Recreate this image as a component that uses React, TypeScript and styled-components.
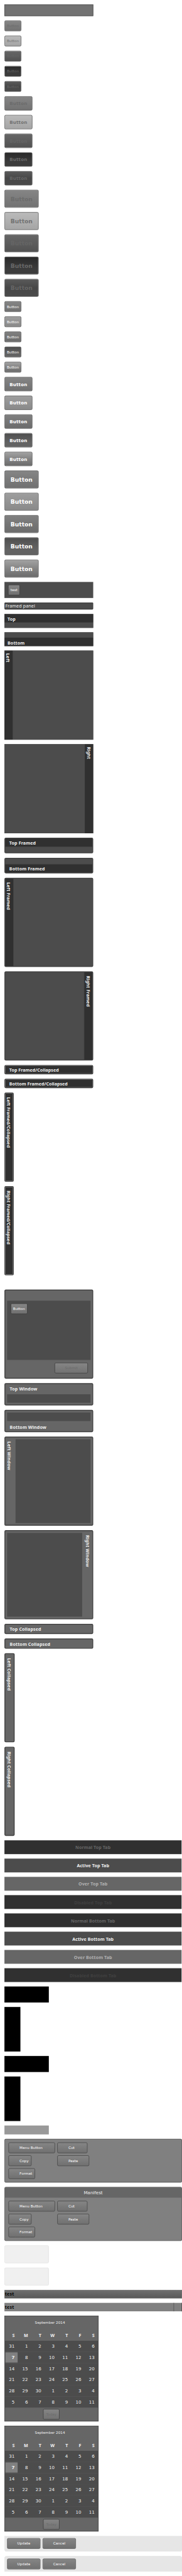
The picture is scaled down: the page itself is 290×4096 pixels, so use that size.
import React from 'react';
import styled, { createGlobalStyle, css } from 'styled-components';

const GlobalStyle = createGlobalStyle`
  body { margin: 0; background: #fff; }
  *, *::before, *::after { box-sizing: border-box; }
`;

const UI_FONT = '"DejaVu Sans", Verdana, sans-serif';
const TITLE_FONT = '"Noto Sans", "Open Sans", sans-serif';

/* The sheet is laid out at its natural size and scaled down to the window. */
const Viewport = styled.div`
  width: 290px;
  height: 4096px;
  overflow: hidden;
`;

const Sheet = styled.main`
  display: flex;
  flex-direction: column;
  align-items: flex-start;
  gap: 10px;
  width: 410px;
  height: 5781px;
  padding: 10px 0 10px 10px;
  transform: scale(0.70732, 0.70853);
  transform-origin: 0 0;
  font: 10px/12px ${UI_FONT};
  color: #000;
  & > * { flex-shrink: 0; }
`;

const Toolbar = styled.div`
  width: 200px;
  height: 26px;
  border: 1px solid #404040;
  background: #727272;
`;

/* ---------- buttons ---------- */

type Tone =
  | 'plain' | 'light' | 'dark' | 'darkPressed' | 'darkDisabled'
  | 'normal' | 'over' | 'focus' | 'pressed' | 'glossy';
type Size = 'small' | 'medium' | 'large';

const tones: Record<Tone, { fill: string; text: string }> = {
  plain: { fill: '#858585, #727272', text: '#6b6b6b' },
  light: { fill: '#bababa, #a5a5a5', text: '#727272' },
  dark: { fill: '#666666, #525252', text: '#656565' },
  darkPressed: { fill: '#292929, #333333 35%, #3c3c3c 70%, #3c3c3c', text: '#686868' },
  darkDisabled: { fill: '#5a5a5a, #474747 50%, #4b4b4b', text: '#666666' },
  normal: { fill: '#858585, #707070', text: '#ffffff' },
  over: { fill: '#9e9e9e, #898989', text: '#ffffff' },
  focus: { fill: '#808080, #6b6b6b', text: '#ffffff' },
  pressed: { fill: '#4e4e4e, #5a5a5a 35%, #636363 70%, #636363', text: '#ffffff' },
  glossy: { fill: '#a2a2a2, #848484 50%, #6b6b6b', text: '#ffffff' },
};

const sizes = {
  small: css`width: 38px; height: 24px; padding-top: 1px; font-size: 8px; letter-spacing: 0.05px;`,
  medium: css`width: 63px; height: 32px; padding-top: 2px; font-size: 10px; font-weight: bold; letter-spacing: 0.3px;`,
  large: css`width: 77px; height: 40px; padding-top: 2px; font-size: 13px; font-weight: bold;`,
};

const Button = styled.button<{ $tone?: Tone; $size?: Size; $width?: number; $menu?: boolean }>`
  display: flex;
  flex: none;
  align-items: center;
  justify-content: ${p => (p.$menu ? 'flex-start' : 'center')};
  margin: 0;
  padding: 0 0 0 ${p => (p.$menu ? 24 : 0)}px;
  border: 1px solid #404040;
  border-radius: 3px;
  background: linear-gradient(${p => tones[p.$tone ?? 'normal'].fill});
  color: ${p => tones[p.$tone ?? 'normal'].text};
  font-family: ${UI_FONT};
  line-height: 1.2;
  white-space: nowrap;
  ${p => sizes[p.$size ?? 'small']}
  ${p => p.$width && css`width: ${p.$width}px;`}
`;

/* ---------- panels ---------- */

type Side = 'top' | 'bottom' | 'left' | 'right';
type Kind = 'flat' | 'framed' | 'window';

const directions: Record<Side, string> = {
  top: 'column', bottom: 'column-reverse', left: 'row', right: 'row-reverse',
};
const isUpright = (side: Side) => side === 'left' || side === 'right';

const PanelBox = styled.section<{ $side: Side; $kind: Kind; $collapsed?: boolean }>`
  display: flex;
  flex-direction: ${p => directions[p.$side]};
  align-items: stretch;
  width: ${p => (p.$collapsed && isUpright(p.$side) ? 'auto' : '200px')};
  height: ${p => (isUpright(p.$side) ? '200px' : 'auto')};
  ${p => p.$kind !== 'flat' && css`
    border: 2px solid #404040;
    border-radius: 3px;
  `}
  background: ${p => (p.$kind === 'window' ? '#666' : '#4c4c4c')};
`;

const headerThickness = (kind: Kind, collapsed?: boolean) =>
  kind === 'flat' ? 19 : kind === 'framed' ? (collapsed ? 17 : 18) : collapsed ? 19 : 23;

/* Space between the header's edge and the caption, across the text. */
const captionInset = (side: Side, kind: Kind, collapsed?: boolean) => {
  switch (side) {
    case 'left':
      return { flat: 1.5, framed: 0.6, window: 2 }[kind];
    case 'right':
      return { flat: 2, framed: collapsed ? 0.6 : 2, window: collapsed ? 2 : 6 }[kind];
    case 'top':
      return { flat: 3.5, framed: 2.4, window: 3.2 }[kind];
    default:
      return { flat: 3.5, framed: collapsed ? 2.4 : 3.4, window: collapsed ? 3.2 : 7.3 }[kind];
  }
};

const Header = styled.header<{ $side: Side; $kind: Kind; $collapsed?: boolean }>`
  display: flex;
  flex: none;
  background: ${p => (p.$kind === 'window' ? 'transparent' : '#303030')};
  color: #f0f0f0;
  font: bold 10px/14px ${TITLE_FONT};
  letter-spacing: ${p => (p.$kind === 'framed' && p.$collapsed ? 0.05 : 0.18)}px;
  white-space: nowrap;
  ${p => {
    const thickness = headerThickness(p.$kind, p.$collapsed);
    const start = { flat: 7, framed: 9, window: 10 }[p.$kind];
    const inset = captionInset(p.$side, p.$kind, p.$collapsed);
    return isUpright(p.$side)
      ? css`
        writing-mode: vertical-rl;
        width: ${thickness}px;
        padding: ${start - 1}px ${thickness - 14 - inset}px 0 ${inset}px;
      `
      : css`
        height: ${thickness}px;
        padding: ${inset}px 0 0 ${start}px;
      `;
  }}
`;

const Body = styled.div<{ $side: Side; $kind: Kind }>`
  flex: 1;
  min-height: ${p => (p.$kind === 'window' ? 19 : 12)}px;
  background: #4c4c4c;
  ${p => p.$kind === 'framed' && {
    top: css`border-top: 1px solid #404040; min-height: 13px;`,
    bottom: css`border-bottom: 1px solid #404040; min-height: 13px;`,
    left: css`border-left: 1px solid #404040;`,
    right: css`border-right: 1px solid #404040;`,
  }[p.$side]}
  ${p => p.$kind === 'window' && {
    top: css`margin: 0 4px 4px;`,
    bottom: css`margin: 4px 4px 0;`,
    left: css`margin: 4px 4px 4px 0;`,
    right: css`margin: 4px 0 4px 4px;`,
  }[p.$side]}
`;

function Panel({ title, side, kind, collapsed }: { title: string; side: Side; kind: Kind; collapsed?: boolean }) {
  return (
    <PanelBox $side={side} $kind={kind} $collapsed={collapsed}>
      <Header $side={side} $kind={kind} $collapsed={collapsed}>{title}</Header>
      {!collapsed && <Body $side={side} $kind={kind} />}
    </PanelBox>
  );
}

const ButtonPanel = styled.div`
  width: 200px;
  height: 36px;
  padding: 6px 8px;
  background: #4c4c4c;
`;

const FramedPanel = styled.div`
  width: 200px;
  height: 16px;
  border: 2px solid #404040;
  border-radius: 2px;
  background: #4c4c4c;
  color: #f0f0f0;
  font: 10px/13px ${TITLE_FONT};
  letter-spacing: 0.2px;
`;

const Dialog = styled.section`
  display: flex;
  flex-direction: column;
  width: 200px;
  height: 200px;
  margin-top: 22px;
  padding: 23px 4px 0;
  border: 2px solid #404040;
  border-radius: 3px;
  background: #666;
`;

const DialogBody = styled.div`
  height: 133px;
  padding: 6px 8px;
  background: #4c4c4c;
`;

const DialogFooter = styled.footer`
  display: flex;
  justify-content: flex-end;
  padding: 6px 6px 0;
`;

/* ---------- tabs, blocks, groups ---------- */

const Tab = styled.div<{ $fill: string; $text: string }>`
  width: 399px;
  height: 31px;
  padding-top: 9.4px;
  background: ${p => p.$fill};
  color: ${p => p.$text};
  font: bold 10px/14px ${TITLE_FONT};
  letter-spacing: 0.12px;
  text-align: center;
`;

const Block = styled.div<{ $w: number; $h: number; $fill?: string }>`
  width: ${p => p.$w}px;
  height: ${p => p.$h}px;
  background: ${p => p.$fill ?? '#000'};
`;

const Group = styled.section`
  width: 400px;
  border: 1px solid #404040;
  border-radius: 3px;
  background: #808080;
  overflow: hidden;
`;

const GroupTitle = styled.header`
  height: 23px;
  background: #666;
  color: #f0f0f0;
  font: 10px/23px ${UI_FONT};
  text-align: center;
`;

const GroupGrid = styled.div<{ $titled?: boolean }>`
  display: grid;
  grid-template-columns: 105px 1fr;
  gap: 5px;
  padding: 7px 8px;
`;

const Tip = styled.div`
  width: 100px;
  height: 40px;
  border: 1px solid #e1e1e1;
  border-radius: 3px;
  background: #f0f0f0;
`;

const GridHeader = styled.div<{ $over?: boolean }>`
  display: flex;
  justify-content: space-between;
  width: 400px;
  height: 19px;
  border-right: 1px solid #444;
  padding-left: 1px;
  background: ${p => (p.$over ? '#808080' : 'linear-gradient(#6f6f6f, #585858)')};
  font: bold 10px/19px ${TITLE_FONT};
  letter-spacing: 0.35px;
`;

const Trigger = styled.span`
  width: 18px;
  border-left: 1px solid #505050;
`;

/* ---------- date picker ---------- */

const Picker = styled.section`
  width: 212px;
  border: 1px solid #404040;
  background: #666;
  color: #f0f0f0;
`;

const Month = styled.div`
  height: 30px;
  padding-right: 7px;
  font-size: 8px;
  letter-spacing: 0.05px;
  line-height: 30px;
  text-align: center;
`;

const Week = styled.div<{ $head?: boolean }>`
  display: grid;
  grid-template-columns: repeat(7, 30px);
  height: 25px;
  line-height: 25px;
  text-align: right;
  background: ${p => (p.$head ? 'transparent' : '#4c4c4c')};
  ${p => p.$head && css`font-family: ${TITLE_FONT}; font-weight: bold;`}
`;

const Day = styled.span<{ $selected?: boolean }>`
  padding-right: 8px;
  ${p => p.$selected && css`
    padding-right: 7px;
    border: 1px solid #404040;
    background: #808080;
    font-weight: bold;
    line-height: 23px;
  `}
`;

const PickerFooter = styled.footer`
  display: flex;
  justify-content: center;
  height: 30px;
  padding: 3px 1px 0 0;
`;

const weeks = [
  [31, 1, 2, 3, 4, 5, 6],
  [7, 8, 9, 10, 11, 12, 13],
  [14, 15, 16, 17, 18, 19, 20],
  [21, 22, 23, 24, 25, 26, 27],
  [28, 29, 30, 1, 2, 3, 4],
  [5, 6, 7, 8, 9, 10, 11],
];

function DatePicker() {
  return (
    <Picker>
      <Month>September 2014</Month>
      <Week $head>
        {['S', 'M', 'T', 'W', 'T', 'F', 'S'].map((d, i) => <Day key={i}>{d}</Day>)}
      </Week>
      {weeks.map((week, r) => (
        <Week key={r}>
          {week.map((d, c) => <Day key={c} $selected={r === 1 && c === 0}>{d}</Day>)}
        </Week>
      ))}
      <PickerFooter><Button $tone="plain" $width={37}>Today</Button></PickerFooter>
    </Picker>
  );
}

/* ---------- row editor ---------- */

const EditorBar = styled.div<{ $edge: 'top' | 'bottom' }>`
  display: flex;
  gap: 5px;
  width: 400px;
  height: 35px;
  padding: 5px 5px 0;
  border: 1px solid #e1e1e1;
  background: #e6e6e6;
  ${p => p.$edge === 'bottom'
    ? css`border-top: 0; border-radius: 0 0 5px 5px;`
    : css`border-bottom: 0; border-radius: 5px 5px 0 0;`}
`;

const menuItems: [string, number][] = [
  ['Menu Button', 105], ['Cut', 68], ['Copy', 52], ['Paste', 72], ['Format', 60],
];

const MenuButtons = () => (
  <GroupGrid>
    {menuItems.map(([label, w]) => <Button key={label} $menu $width={w}>{label}</Button>)}
  </GroupGrid>
);

const allSizes: Size[] = ['small', 'medium', 'large'];
const buttonSets: Tone[][] = [
  ['plain', 'light', 'dark', 'darkPressed', 'darkDisabled'],
  ['normal', 'over', 'focus', 'pressed', 'glossy'],
];
const sides: [string, Side][] = [['Top', 'top'], ['Bottom', 'bottom'], ['Left', 'left'], ['Right', 'right']];
const tabStates: [string, string, string][] = [
  ['Normal', '#303030', '#666666'],
  ['Active', '#4c4c4c', '#f0f0f0'],
  ['Over', '#666666', '#b2b2b2'],
  ['Disabled', '#303030', '#404040'],
];

export default function App() {
  return (
    <Viewport>
      <GlobalStyle />
      <Sheet>
        <Toolbar />
        {buttonSets.map(set => allSizes.map(size => set.map(tone => (
          <Button key={size + tone} $tone={tone} $size={size}>Button</Button>
        ))))}
        <ButtonPanel><Button $width={27}>test</Button></ButtonPanel>
        <FramedPanel>Framed panel</FramedPanel>
        {sides.map(([n, s]) => <Panel key={s} title={n} side={s} kind="flat" />)}
        {sides.map(([n, s]) => <Panel key={s} title={`${n} Framed`} side={s} kind="framed" />)}
        {sides.map(([n, s]) => <Panel key={s} title={`${n} Framed/Collapsed`} side={s} kind="framed" collapsed />)}
        <Dialog>
          <DialogBody><Button>Button</Button></DialogBody>
          <DialogFooter><Button $tone="plain" $width={75}>Submit</Button></DialogFooter>
        </Dialog>
        {sides.map(([n, s]) => <Panel key={s} title={`${n} Window`} side={s} kind="window" />)}
        {sides.map(([n, s]) => <Panel key={s} title={`${n} Collapsed`} side={s} kind="window" collapsed />)}
        {['Top', 'Bottom'].map(edge => tabStates.map(([state, fill, text]) => (
          <Tab key={edge + state} $fill={fill} $text={text}>{`${state} ${edge} Tab`}</Tab>
        )))}
        <Block $w={100} $h={36} />
        <Block $w={36} $h={100} />
        <Block $w={100} $h={36} />
        <Block $w={36} $h={100} />
        <Block $w={100} $h={20} $fill="#999" />
        <Group><MenuButtons /></Group>
        <Group>
          <GroupTitle>Manifest</GroupTitle>
          <MenuButtons />
        </Group>
        <Tip />
        <Tip />
        <GridHeader>test</GridHeader>
        <GridHeader $over>test<Trigger /></GridHeader>
        <DatePicker />
        <DatePicker />
        <EditorBar $edge="bottom"><Button $width={75}>Update</Button><Button $width={75}>Cancel</Button></EditorBar>
        <EditorBar $edge="top"><Button $width={75}>Update</Button><Button $width={75}>Cancel</Button></EditorBar>
      </Sheet>
    </Viewport>
  );
}
